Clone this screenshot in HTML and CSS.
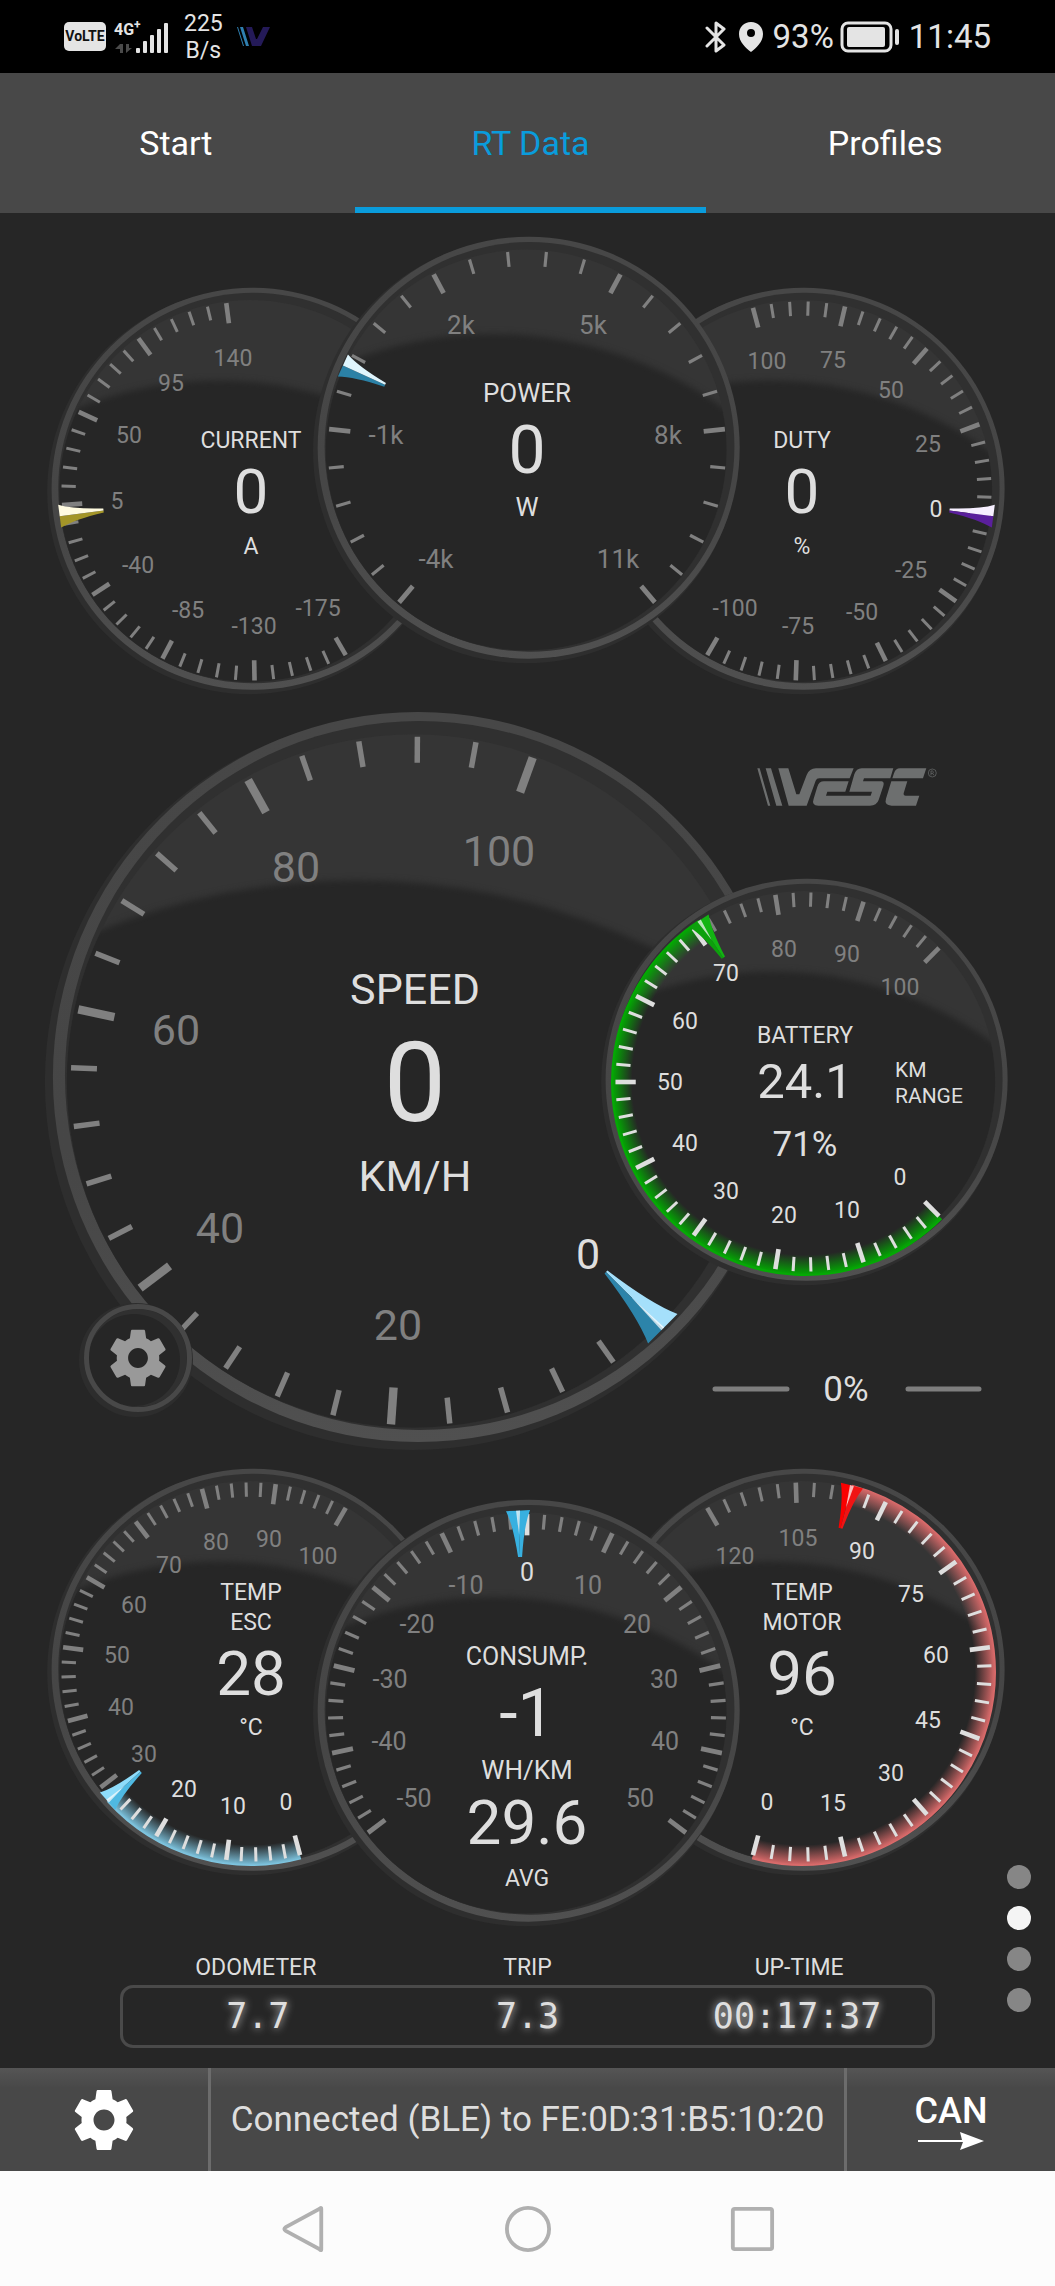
FILE: index.html
```html
<!DOCTYPE html>
<html lang="en">
<head>
  <meta charset="UTF-8" />
  <meta name="viewport" content="width=device-width, initial-scale=1.0"/>
  <title>VESC Tool - RT Data</title>
  <link rel="stylesheet" href="styles.css">
</head>
<body>
  <svg width="0" height="0" class="symbols" aria-hidden="true">
    <symbol id="gear" viewBox="0 0 24 24">
      <path d="M19.43 12.98c.04-.32.07-.64.07-.98s-.03-.66-.07-.98l2.11-1.65c.19-.15.24-.42.12-.64l-2-3.46c-.12-.22-.39-.3-.61-.22l-2.49 1c-.52-.4-1.08-.73-1.69-.98l-.38-2.65C14.46 2.18 14.25 2 14 2h-4c-.25 0-.46.18-.49.42l-.38 2.65c-.61.25-1.17.59-1.69.98l-2.49-1c-.23-.09-.49 0-.61.22l-2 3.46c-.13.22-.07.49.12.64l2.11 1.65c-.04.32-.07.65-.07.98s.03.66.07.98l-2.11 1.65c-.19.15-.24.42-.12.64l2 3.46c.12.22.39.3.61.22l2.49-1c.52.4 1.08.73 1.69.98l.38 2.65c.03.24.24.42.49.42h4c.25 0 .46-.18.49-.42l.38-2.65c.61-.25 1.17-.59 1.69-.98l2.49 1c.23.09.49 0 .61-.22l2-3.46c.12-.22.07-.49-.12-.64l-2.11-1.65zM12 15.5c-1.93 0-3.5-1.57-3.5-3.5s1.57-3.5 3.5-3.5 3.5 1.57 3.5 3.5-1.57 3.5-3.5 3.5z"/>
    </symbol>
  </svg>

  <header class="status-bar">
    <div class="status-group">
      <span class="volte">VoLTE</span>
      <div class="signal">
        <span class="network">4G<sup>+</sup></span>
        <svg class="bars" viewBox="0 0 54 34" aria-hidden="true">
          <path fill="#4a4a4a" d="M6 24v9H9V24ZM6 24L1 29H6ZM12 24V33L18 28H15V24Z"/>
          <g fill="#e4e4e4">
            <rect x="22" y="28" width="4" height="5" rx="1"/>
            <rect x="29" y="21" width="4" height="12" rx="1"/>
            <rect x="36" y="15" width="4" height="18" rx="1"/>
            <rect x="43" y="9" width="4" height="24" rx="1"/>
            <rect x="50" y="3" width="4" height="30" rx="1"/>
          </g>
        </svg>
      </div>
      <span class="speed">225<br>B/s</span>
      <svg class="app-icon" viewBox="0 0 33 19" aria-hidden="true">
        <path fill="#2f7fb0" d="M0 0h1l6 19H6ZM3 0h3l6 19H9Z"/>
        <path fill="#241a58" d="M9 0h6l4 12h1l6-12h7L24 19H15Z"/>
      </svg>
    </div>
    <div class="status-group">
      <svg class="bluetooth" viewBox="0 0 22 34" aria-hidden="true">
        <path d="M2 8L19 25L11 31V3L19 9L2 26"/>
      </svg>
      <svg class="pin" viewBox="0 0 26 32" aria-hidden="true">
        <path fill-rule="evenodd" d="M13 1C6 1 1 6 1 13c0 8 7 14 12 18c5-4 12-10 12-18C25 6 20 1 13 1ZM13 8a4 4 0 1 1 0 8a4 4 0 1 1 0-8Z"/>
      </svg>
      <span class="percent">93%</span>
      <svg class="battery" viewBox="0 0 60 32" aria-hidden="true">
        <rect x="2" y="2" width="49" height="28" rx="6" fill="none" stroke="#e4e4e4" stroke-width="3"/>
        <rect x="7" y="6" width="38" height="20" rx="2"/>
        <rect x="55" y="8" width="4" height="16" rx="2"/>
      </svg>
      <span class="clock">11:45</span>
    </div>
  </header>

  <nav class="tabs">
    <a href="#start">Start</a>
    <a href="#rt-data" class="active">RT Data</a>
    <a href="#profiles">Profiles</a>
  </nav>

  <main class="dashboard">
    <svg class="cluster" id="power" viewBox="0 0 1055 487"></svg>

    <div class="speed-cluster">
      <svg class="cluster" id="speed" viewBox="0 0 1055 755"></svg>
      <button class="gauge-settings" aria-label="Gauge settings">
        <svg><use href="#gear"/></svg>
      </button>
    </div>

    <svg class="cluster" id="temps" viewBox="0 0 1055 485"></svg>

    <section class="trip">
      <div class="trip-labels">
        <span>ODOMETER</span>
        <span>TRIP</span>
        <span>UP-TIME</span>
      </div>
      <div class="trip-values">
        <span>7.7</span>
        <span>7.3</span>
        <span>00:17:37</span>
      </div>
    </section>

    <div class="pages">
      <i></i>
      <i class="current"></i>
      <i></i>
      <i></i>
    </div>
  </main>

  <footer class="toolbar">
    <button class="tool" aria-label="Settings">
      <svg class="gear"><use href="#gear"/></svg>
    </button>
    <p class="connection">Connected (BLE) to FE:0D:31:B5:10:20</p>
    <button class="tool can">
      <span>CAN</span>
      <svg viewBox="0 0 66 18" aria-hidden="true"><path d="M0 8H44L42 0L66 9L42 18L45 10H0Z"/></svg>
    </button>
  </footer>

  <nav class="system-nav">
    <button aria-label="Back"><svg viewBox="0 0 48 48"><path d="M42 3V45Q42 47 40 45L5 26Q2 24 5 22L40 3Q42 1 42 3Z"/></svg></button>
    <button aria-label="Home"><svg viewBox="0 0 48 48"><circle cx="24" cy="24" r="22"/></svg></button>
    <button aria-label="Recent apps"><svg viewBox="0 0 48 48"><rect x="4" y="3" width="41" height="42" rx="2"/></svg></button>
  </nav>

  <script src="gauges.js"></script>
</body>
</html>
```
FILE: styles.css
```css
:root {
  --bg: #262626;
  --bar: #484848;
  --accent: #0a9cdc;
  --text: #dedede;
  --muted: #808080;
}

* {
  margin: 0;
  padding: 0;
  box-sizing: border-box;
}

body {
  font-family: Roboto, sans-serif;
  background: #fcfcfc;
  color: var(--text);
  overflow-x: hidden;
}

button {
  background: none;
  border: none;
  color: inherit;
  font: inherit;
  cursor: pointer;
}

.symbols {
  display: none;
}

/* phone status bar */
.status-bar {
  height: 73px;
  padding: 0 64px;
  display: flex;
  justify-content: space-between;
  align-items: center;
  background: #000;
  color: #e4e4e4;
  fill: #e4e4e4;
}

.status-group {
  display: flex;
  align-items: center;
}

.volte {
  width: 42px;
  height: 29px;
  border-radius: 5px;
  background: #e4e4e4;
  color: #111;
  font-size: 14px;
  line-height: 29px;
  font-weight: bold;
  text-align: center;
}

.signal {
  position: relative;
  margin-left: 8px;
}

.network {
  position: absolute;
  left: 0;
  top: 0;
  font-size: 16px;
  line-height: 20px;
  font-weight: bold;
}

.network sup {
  font-size: 12px;
  line-height: 1px;
}

.bars {
  display: block;
  width: 54px;
  height: 34px;
}

.speed {
  margin-left: 16px;
  font-size: 23px;
  line-height: 27px;
  text-align: center;
}

.app-icon {
  width: 33px;
  height: 19px;
  margin-left: 14px;
}

.bluetooth {
  width: 22px;
  height: 34px;
  fill: none;
  stroke: #e4e4e4;
  stroke-width: 3;
  stroke-linejoin: round;
  stroke-linecap: round;
}

.pin {
  width: 26px;
  height: 32px;
  margin-left: 11px;
}

.percent,
.clock {
  font-size: 33px;
  margin-left: 9px;
}

.battery {
  width: 60px;
  height: 32px;
  margin-left: 6px;
}

/* tabs */
.tabs {
  display: grid;
  grid-template-columns: repeat(3, 1fr);
  gap: 3px;
  margin-right: -6px;
  background: var(--bar);
}

.tabs a {
  height: 140px;
  border-bottom: 6px solid transparent;
  color: #fff;
  font-size: 34px;
  line-height: 140px;
  text-align: center;
  text-decoration: none;
}

.tabs .active {
  color: var(--accent);
  border-color: var(--accent);
}

/* gauges */
.dashboard {
  position: relative;
  background: var(--bg);
}

.cluster {
  display: block;
  width: 100%;
  height: auto;
}

.cluster text {
  fill: var(--text);
  text-anchor: middle;
}

.cluster text.left {
  text-anchor: start;
}

.cluster .off {
  fill: var(--muted);
}

.tick {
  stroke: var(--muted);
}

.tick.on {
  stroke: var(--text);
}

.speed-cluster {
  position: relative;
}

.gauge-settings {
  position: absolute;
  left: 8%;
  top: 80%;
  width: 108px;
  height: 108px;
  border: 5px solid #484848;
  border-radius: 50%;
  background: var(--bg);
  box-shadow: -2px 2px 0 3px #2d2d2d, inset -4px 2px 0 3px #303030;
}

.gauge-settings svg {
  display: block;
  width: 68px;
  height: 68px;
  margin: auto;
  fill: #999;
}

.trip {
  margin: 0 120px;
  padding: 16px 0 20px;
}

.trip-labels,
.trip-values {
  display: grid;
  grid-template-columns: repeat(3, 1fr);
  text-align: center;
}

.trip-labels {
  font-size: 23px;
  line-height: 24px;
  margin-bottom: 5px;
}

.trip-values {
  border: 3px solid #4a4a4a;
  border-radius: 13px;
  font-family: "DejaVu Sans Mono", monospace;
  font-size: 35px;
  line-height: 57px;
  text-shadow: 0 0 8px rgba(255, 255, 255, 0.8);
}

.pages {
  position: absolute;
  right: 24px;
  bottom: 56px;
  display: grid;
  gap: 17px;
}

.pages i {
  width: 24px;
  height: 24px;
  border-radius: 50%;
  background: #868686;
}

.pages .current {
  background: #f4f4f4;
}

/* connection bar */
.toolbar {
  display: flex;
  height: 103px;
  background: linear-gradient(#555, #484848 20px);
}

.tool {
  width: 208px;
  display: flex;
  flex-direction: column;
  align-items: center;
  justify-content: center;
  fill: #fff;
  color: #fff;
}

.gear {
  width: 72px;
  height: 72px;
}

.connection {
  flex: 1;
  border-left: 3px solid #6c6c6c;
  border-right: 3px solid #6c6c6c;
  font-size: 35px;
  line-height: 104px;
  text-align: center;
  white-space: nowrap;
}

.can span {
  font-size: 36px;
  line-height: 42px;
  font-weight: 500;
}

.can svg {
  width: 66px;
  height: 18px;
}

.system-nav {
  height: 115px;
  display: flex;
  justify-content: center;
  align-items: center;
  gap: 178px;
}

.system-nav button,
.system-nav svg {
  display: block;
  width: 46px;
  height: 46px;
}

.system-nav svg {
  fill: none;
  stroke: #b0b0b0;
  stroke-width: 4;
}
```
FILE: gauges.js
```js
const NS = "http://www.w3.org/2000/svg";
let gaugeCount = 0;

function add(parent, name, attrs, text) {
  const el = document.createElementNS(NS, name);
  for (const key in attrs) el.setAttribute(key, attrs[key]);
  if (text !== undefined) el.textContent = text;
  parent.appendChild(el);
  return el;
}

// angles are clockwise from 12 o'clock
function polar(g, angle, radius) {
  const a = angle * Math.PI / 180;
  return [g.x + radius * Math.sin(a), g.y - radius * Math.cos(a)];
}

function addText(svg, x, y, size, text, cls) {
  add(svg, "text", { x, y: Math.round(y + size * 0.355), "font-size": size, class: cls || "" }, text);
}

function drawDial(svg, g, id) {
  const r = g.r;
  const rimX = g.x + r * 0.008;
  const rimY = g.y - r * 0.011;
  const defs = add(svg, "defs", {});
  const rim = add(defs, "linearGradient", { id: "rim" + id, x1: 0, y1: 0, x2: 0, y2: 1 });
  add(rim, "stop", { offset: 0, "stop-color": "#474747" });
  add(rim, "stop", { offset: 0.6, "stop-color": "#464646" });
  add(rim, "stop", { offset: 1, "stop-color": "#505050" });
  const clip = add(defs, "clipPath", { id: "face" + id });
  const face = { cx: g.x - r * 0.004, cy: g.y, r: r * 0.95 };
  add(clip, "circle", face);

  add(svg, "circle", { cx: rimX - r * 0.014, cy: rimY + r * 0.014, r: r * 1.008, fill: "#2e2e2e" });
  add(svg, "circle", { cx: rimX, cy: rimY, r, fill: `url(#rim${id})` });
  add(svg, "circle", { cx: rimX + r * 0.004, cy: rimY - r * 0.004, r: r * 0.971, fill: "#303030" });
  add(svg, "circle", { ...face, fill: "#353535" });
  const shade = add(svg, "g", { "clip-path": `url(#face${id})` });
  add(shade, "circle", {
    cx: g.x - r * 0.16, cy: g.y + r * 1.32, r: r * 1.87,
    fill: "#262626", style: "filter: blur(3px)"
  });
}

function drawGlow(svg, g, id, valueAngle) {
  const outer = g.r * 0.965;
  const inner = g.r * 0.86;
  const grad = add(svg, "radialGradient", {
    id: "glow" + id, gradientUnits: "userSpaceOnUse", cx: g.x, cy: g.y, r: outer
  });
  add(grad, "stop", { offset: inner / outer, "stop-color": g.glow, "stop-opacity": 0 });
  add(grad, "stop", { offset: 1, "stop-color": g.glow, "stop-opacity": 1 });
  const mid = (outer + inner) / 2;
  const cw = valueAngle > g.start ? 1 : 0;
  const large = Math.abs(valueAngle - g.start) > 180 ? 1 : 0;
  add(svg, "path", {
    d: `M${polar(g, g.start, mid)}A${mid} ${mid} 0 ${large} ${cw} ${polar(g, valueAngle, mid)}`,
    fill: "none", stroke: `url(#glow${id})`, "stroke-width": outer - inner
  });
}

function drawNeedle(svg, g, angle) {
  const r = g.r;
  const w = r * 0.057;
  const tip = -r * 0.74;
  const base = -r * 0.96;
  const bend = -r * 0.89;
  const needle = add(svg, "g", { transform: `translate(${g.x} ${g.y}) rotate(${angle})` });
  add(needle, "path", { d: `M0 ${tip}H-2Q${-w * 0.45} ${bend} ${-w} ${base}H0Z`, fill: g.needle[0] });
  add(needle, "path", { d: `M0 ${tip}H2Q${w * 0.45} ${bend} ${w} ${base}H0Z`, fill: g.needle[1] });
  if (g.shine) {
    add(needle, "path", { d: `M0 ${bend * 0.95}L-2 ${base}H2Z`, fill: "#fff", opacity: 0.7 });
  }
}

function drawGauge(svg, g) {
  const id = gaugeCount++;
  const r = g.r;
  const steps = g.labels.length - 1;
  const min = g.min;
  const toAngle = v => g.start + (v - min) / (g.max - min) * (g.end - g.start);
  const lit = v => g.lit && v >= g.lit[0] && v <= g.lit[1];

  drawDial(svg, g, id);
  if (g.glow) drawGlow(svg, g, id, toAngle(g.value));

  for (let i = 0; i <= steps * 5; i++) {
    const value = min + (g.max - min) * i / (steps * 5);
    const major = i % 5 === 0;
    const [x1, y1] = polar(g, toAngle(value), r * 0.943);
    const [x2, y2] = polar(g, toAngle(value), r * (major ? 0.842 : 0.872));
    add(svg, "line", {
      x1, y1, x2, y2,
      class: lit(value) ? "tick on" : "tick",
      "stroke-width": r * (major ? 0.023 : 0.015)
    });
  }

  g.labels.forEach((label, i) => {
    const value = min + (g.max - min) * i / steps;
    const [x, y] = polar(g, toAngle(value), r * 0.67);
    addText(svg, Math.round(x), y, g.labelSize, label, lit(value) ? "" : "off");
  });

  drawNeedle(svg, g, toAngle(g.value));
  g.text.forEach(([dy, size, text]) => addText(svg, g.x, g.y + dy, size, text));
}

const power = document.getElementById("power");
drawGauge(power, {
  x: 251, y: 278, r: 201, start: 150, end: 352.5, min: -175, max: 140, value: 0,
  labels: [-175, -130, -85, -40, 5, 50, 95, 140], labelSize: 23,
  needle: ["#a39528", "#fffbe0"],
  text: [[-51, 23, "CURRENT"], [0, 62, "0"], [55, 23, "A"]]
});
drawGauge(power, {
  x: 802, y: 278, r: 201, start: 210, end: -15, min: -100, max: 100, value: 0,
  labels: [-100, -75, -50, -25, 0, 25, 50, 75, 100], labelSize: 23, lit: [0, 0],
  needle: ["#f6efff", "#5a1f9c"],
  text: [[-51, 23, "DUTY"], [0, 62, "0"], [55, 23, "%"]]
});
drawGauge(power, {
  x: 527, y: 237, r: 211, start: 220, end: 500, min: -4, max: 11, value: 0,
  labels: ["-4k", "-1k", "2k", "5k", "8k", "11k"], labelSize: 26,
  needle: ["#2b81a6", "#dff5fd"],
  text: [[-57, 26, "POWER"], [0, 66, "0"], [57, 26, "W"]]
});

const speed = document.getElementById("speed");
drawGauge(speed, {
  x: 415, y: 381, r: 365, start: 135, end: 380, min: 0, max: 100, value: 0,
  labels: [0, 20, 40, 60, 80, 100], labelSize: 43, lit: [0, 0],
  needle: ["#a5e0fb", "#2c84aa"], shine: true,
  text: [[-92, 43, "SPEED"], [1, 111, "0"], [95, 43, "KM/H"]]
});
drawGauge(speed, {
  x: 805, y: 382, r: 201, start: 135, end: 405, min: 0, max: 100, value: 71,
  labels: [0, 10, 20, 30, 40, 50, 60, 70, 80, 90, 100], labelSize: 23, lit: [0, 71],
  glow: "#00b000", needle: ["#0ca00c", "#12b412"], shine: true,
  text: [[-47, 23, "BATTERY"], [-1, 49, "24.1"], [62, 35, "71%"]]
});
addText(speed, 895, 370, 21, "KM", "left");
addText(speed, 895, 396, 21, "RANGE", "left");
addText(speed, 846, 689, 35, "0%");
add(speed, "path", {
  d: "M715 689H787M908 689H979", stroke: "#7e7e7e", "stroke-width": 5, "stroke-linecap": "round"
});

// VESC logo
const logo = add(speed, "g", { transform: "translate(700 40) scale(0.3333)", fill: "#6d6f6f" });
add(logo, "path", { d: "M172 85H179L211 197H204ZM197 85H213L247 197H229Z" });
add(logo, "path", { d: "M235 85H265L289 163H298L320 105Q328 85 348 85H461L449 115H358Q350 115 347 122L320 197H266Z" });
add(logo, "path", { d: "M372 124H446L436 155H382L378 167H512L516 155H448L463 103Q469 85 485 85H580L571 115H492L489 124H545Q554 126 550 138L536 180Q530 197 510 197H355Q334 196 341 176L352 140Q357 124 372 124Z" });
add(logo, "path", { d: "M600 85H679L669 115H577L582 100Q587 85 600 85ZM574 124H622L611 160Q610 167 617 167H658L648 197H575Q552 195 558 176Z" });
add(logo, "circle", { cx: 697, cy: 99, r: 12, fill: "none", stroke: "#6d6f6f", "stroke-width": 2 });
add(logo, "path", { d: "M693 106V93H698A4 4 0 0 1 698 100H693M698 100L702 106", fill: "none", stroke: "#6d6f6f", "stroke-width": 2 });

const temps = document.getElementById("temps");
drawGauge(temps, {
  x: 251, y: 217, r: 201, start: 165, end: 390, min: 0, max: 100, value: 28,
  labels: [0, 10, 20, 30, 40, 50, 60, 70, 80, 90, 100], labelSize: 23, lit: [0, 28],
  glow: "#7fc8e4", needle: ["#4fb9e2", "#8edcfa"], shine: true,
  text: [[-80, 23, "TEMP"], [-50, 23, "ESC"], [1, 62, "28"], [55, 23, "°C"]]
});
drawGauge(temps, {
  x: 802, y: 217, r: 201, start: 195, end: -30, min: 0, max: 120, value: 96,
  labels: [0, 15, 30, 45, 60, 75, 90, 105, 120], labelSize: 23, lit: [0, 96],
  glow: "#e06c6c", needle: ["#fa0000", "#f01414"], shine: true,
  text: [[-80, 23, "TEMP"], [-50, 23, "MOTOR"], [1, 62, "96"], [55, 23, "°C"]]
});
drawGauge(temps, {
  x: 527, y: 258, r: 211, start: 233, end: 487, min: -50, max: 50, value: -1,
  labels: [-50, -40, -30, -20, -10, 0, 10, 20, 30, 40, 50], labelSize: 25, lit: [0, 0],
  needle: ["#38b0e0", "#38b0e0"], shine: true,
  text: [[-57, 25, "CONSUMP."], [0, 66, "-1"], [57, 26, "WH/KM"], [109, 62, "29.6"], [165, 23, "AVG"]]
});
```
